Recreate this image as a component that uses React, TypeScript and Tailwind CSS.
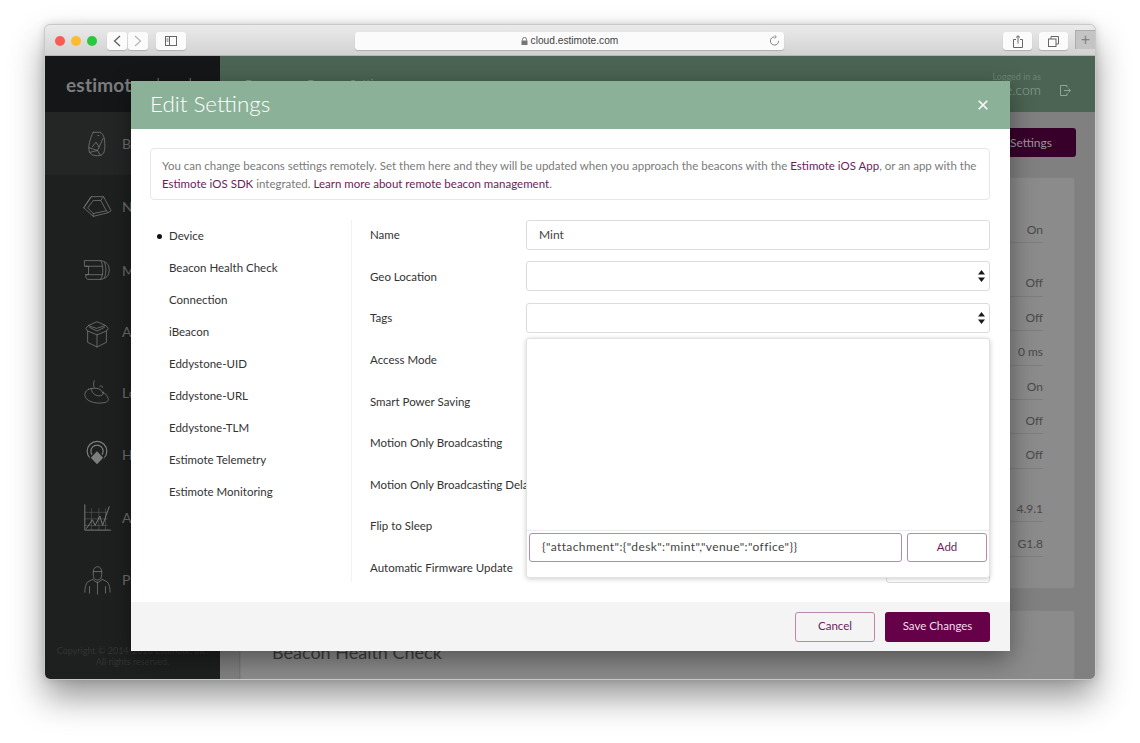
import React from "react";

const Stroke = ({ children, w = 32, h = 32 }: { children: React.ReactNode; w?: number; h?: number }) => (
  <svg width={w} height={h} viewBox="0 0 32 32" fill="none" stroke="#7d7d7d" strokeWidth="0.8" strokeLinejoin="round" strokeLinecap="round">
    {children}
  </svg>
);

const icons: React.ReactNode[] = [
  <Stroke key="a"><path d="M12 3.500h7c3 1 4.500 4 5 8 .6 5 .6 10-.5 13-1 3-4 4-7 4-4 0-7-1-8.500-4-1-3-1-6 0-10 1-4 2-8 4-11z" /><path d="M7.500 20l9 3 3 5M16.500 23l6-13M8 25l8-2M17 7h1" /><path d="M11 19l4-5 3 5" /></Stroke>,
  <Stroke key="b"><path d="M10 5h13l8 15-3 2-16 4-10-9zM10 5l-8 12M23 5l-3 4H12L6 17l6 6 14-3-6-11M12 23v3M26 20l2 2" /></Stroke>,
  <Stroke key="c"><path d="M3 6h17c6 1 9 4 9 10s-3 9-9 10H6c-2-1-2-3-2-5h3v-9H3zM4 12h17M4 21h18M20 6c3 4 3 16 0 20M24 8c2 4 2 12 0 16" /></Stroke>,
  <Stroke key="d"><path d="M16 12l9-3-9-4-9 4zM7 9l-3 3 2 3 10 4 10-4 2-3-3-3M8 11v0l8 4 8-4M6 15v12l10 5 10-5V15M16 19v13" /></Stroke>,
  <Stroke key="e"><path d="M13 3c-1 3-1 5 0 7M7 12c-4 2-5 6-3 9 3 5 13 7 21 5 3-1 4-3 2-6-1-2-2-4-5-4-1-3-3-5-7-5-3 0-6 0-8 1z" /><path d="M10 11c0 5 4 8 8 8 3 0 5-1 5-4M19 9c1-1 3-1 3 1" /></Stroke>,
  <Stroke key="f"><circle cx="16" cy="13" r="10.500" strokeWidth="1.300" /><circle cx="16" cy="13" r="6.500" strokeWidth="1.300" /><path d="M16 12l7.500 8-7.500 8-7.500-8z" fill="#7d7d7d" stroke="#1e1f1f" strokeWidth="1.200" /></Stroke>,
  <Stroke key="g"><path d="M3 3v27h28M3 11h24M3 18h24M3 25h24M10 7v23M18 7v23M25 7v23" strokeWidth="0.400" /><path d="M3 3v27h27" strokeWidth="0.800" /><path d="M5 28l6-9 3 6 5-10 3 10 7-20" strokeWidth="1" /></Stroke>,
  <Stroke key="h"><path d="M12 7c0-7 9-7 9 0v3c0 4-2 6-4.500 6S12 14 12 10zM12 7h9M12 15l-6 3c-2 2-3 7-3 11M21 15l6 3c2 2 3 7 3 11M16.500 18v13M8 23v7M25 23v7M12 16l4.500 3 4.500-3" /></Stroke>,
];

const sideLabels = ["Beacons", "Nearables", "Mirrors", "Apps", "Location", "Health", "Analytics", "Profile"];
const sideTops = ["h-[63px]", "h-[63px]", "h-[64px]", "h-[59px]", "h-[63px]", "h-[60px]", "h-[66px]", "h-[59px]"];

const nav = ["Device", "Beacon Health Check", "Connection", "iBeacon", "Eddystone-UID", "Eddystone-URL", "Eddystone-TLM", "Estimote Telemetry", "Estimote Monitoring"];
const labels = ["Name", "Geo Location", "Tags", "Access Mode", "Smart Power Saving", "Motion Only Broadcasting", "Motion Only Broadcasting Delay", "Flip to Sleep", "Automatic Firmware Update"];

const Arrows = () => (
  <svg width="7" height="12" viewBox="0 0 7 12" className="shrink-0">
    <path d="M3.500 0L7 4.500H0zM3.500 12L0 7.500h7z" fill="#1a1a1a" />
  </svg>
);

const ToolBtn = ({ className, children }: { className: string; children: React.ReactNode }) => (
  <div className={`h-[18px] flex items-center justify-center bg-[#fbfbfb] rounded-[3px] shadow-[0_1px_1px_rgba(0,0,0,0.18)] ${className}`}>{children}</div>
);

const Value = ({ v, h }: { v: string; h: string }) => (
  <div className={`${h} flex items-center justify-end border-b border-[#7e7e7e] text-[12px] text-[#4a4a4a]`}>{v}</div>
);

export default function App() {
  return (
    <div className="w-[1140px] h-[743px] bg-white overflow-hidden pt-[25px] pl-[45px] font-['Lato',sans-serif]">
      <div className="relative w-[1050px] h-[654px] rounded-[5px] overflow-hidden flex flex-col shadow-[0_18px_34px_rgba(0,0,0,0.42),0_0_10px_rgba(0,0,0,0.18)] outline outline-[#c9c9c9]">
        {/* Browser toolbar */}
        <div className="h-[31px] shrink-0 flex items-start pt-[7px] bg-gradient-to-b from-[#ebebeb] to-[#d2d2d2] border-b border-[#b5b5b5]">
          <div className="flex gap-[6px] pl-[10px] pt-[4px] w-[62px]">
            <span className="w-[10px] h-[10px] rounded-full bg-[#fb5a55]" />
            <span className="w-[10px] h-[10px] rounded-full bg-[#fdbc2e]" />
            <span className="w-[10px] h-[10px] rounded-full bg-[#28c83f]" />
          </div>
          <ToolBtn className="w-[20px]">
            <svg width="8" height="12" viewBox="0 0 8 12" fill="none" stroke="#5a5a5a" strokeWidth="1.200"><path d="M7 1L1.500 6 7 11" /></svg>
          </ToolBtn>
          <ToolBtn className="w-[20px] ml-[1px]">
            <svg width="8" height="12" viewBox="0 0 8 12" fill="none" stroke="#b5b5b5" strokeWidth="1.200"><path d="M1 1l5.500 5L1 11" /></svg>
          </ToolBtn>
          <ToolBtn className="w-[30px] ml-[8px]">
            <svg width="12" height="10" viewBox="0 0 12 10" fill="none" stroke="#666" strokeWidth="1"><rect x="0.500" y="0.500" width="11" height="9" /><path d="M4.500 0.500v9M1.500 3h2M1.500 5h2" /></svg>
          </ToolBtn>
          <ToolBtn className="w-[431px] ml-[169px] relative">
            <svg width="7" height="8" viewBox="0 0 7 8" className="mr-[3px]"><path d="M1.500 3.500V2.400a2 2 0 014 0v1.100" fill="none" stroke="#777" /><rect x="0.500" y="3.500" width="6" height="4.500" fill="#777" /></svg>
            <span className="text-[10.200px] text-[#444] font-['Liberation_Sans',sans-serif]">cloud.estimote.com</span>
            <svg width="11" height="11" viewBox="0 0 12 12" fill="none" stroke="#777" strokeWidth="1" className="absolute right-[4px] top-[3px]"><path d="M6 2a4.500 4.500 0 104.500 4.500M6 0.200L8 2 6 3.800" /></svg>
          </ToolBtn>
          <ToolBtn className="w-[29px] ml-[219px]">
            <svg width="10" height="13" viewBox="0 0 10 13" fill="none" stroke="#666" strokeWidth="1"><path d="M3 4.500H.5v8h9v-8H7M5 8.500V1M3 2.500L5 .7l2 1.800" /></svg>
          </ToolBtn>
          <ToolBtn className="w-[29px] ml-[7px]">
            <svg width="11" height="11" viewBox="0 0 11 11" fill="none" stroke="#666" strokeWidth="1"><path d="M3 3V.5h7.500V8H8" /><rect x="0.500" y="3" width="7.500" height="7.500" /></svg>
          </ToolBtn>
          <div className="w-[20px] h-[19px] ml-[7px] mt-[-2px] bg-[#c4c4c4] border-l border-t border-[#adadad] flex items-center justify-center text-[#808080] text-[16px] leading-none font-['Liberation_Sans',sans-serif]">+</div>
        </div>

        {/* Dimmed page */}
        <div className="flex flex-1 min-h-0 bg-[#808080]">
          <aside className="w-[175px] shrink-0 flex flex-col bg-[#1e1f1f]">
            <div className="h-[56px] shrink-0 bg-[#151618] flex items-center pl-[21px] pt-[2px] text-[19px] font-bold text-[#7c7d7e] whitespace-nowrap tracking-[0.2px]">
              estimote<span className="font-light ml-[5px]">cloud</span>
            </div>
            {icons.map((ic, i) => (
              <div key={sideLabels[i]} className={`${sideTops[i]} shrink-0 flex items-center pl-[37px] gap-[10px] ${i === 0 ? "bg-[#242625]" : ""}`}>
                <span className="w-[30px] flex justify-center">{ic}</span>
                <span className="text-[14px] text-[#6e6e6e]">{sideLabels[i]}</span>
              </div>
            ))}
            <div className="mt-auto pb-[12px] text-center text-[9px] leading-[11px] text-[#333434]">
              Copyright © 2014-2016 Estimote, Inc.<br />All rights reserved.
            </div>
          </aside>
          <main className="flex-1 min-w-0 flex flex-col">
            <div className="h-[56px] shrink-0 bg-[#4b6453] flex items-start justify-between pl-[25px] pr-[24px] pt-[15px] text-[#7c9384]">
              <div className="text-[12px] flex gap-[18px] pt-[4px]">
                <span>Beacons</span><span>Beacon Settings</span>
              </div>
              <div className="flex items-center gap-[19px]">
                <div className="text-right">
                  <div className="text-[9px] leading-[10px] text-[#6b8373] pt-[1px]">Logged in as</div>
                  <div className="text-[14px] leading-[14px] font-light text-[#91a497] pt-[1px]">estimote@estimote.com</div>
                </div>
                <svg width="11" height="11" viewBox="0 0 11 11" fill="none" stroke="#91a497" strokeWidth="1" className="mt-[12px]"><path d="M7 2.500V.5H.5v10H7V8M4 5.500h6.500M8.500 3.500l2 2-2 2" /></svg>
              </div>
            </div>
            <div className="flex-1 min-h-0 overflow-hidden border-l border-[#777] ml-[19px] bg-[#8b8b8b] flex flex-col">
              <div className="flex-1 min-h-0 bg-[#808080]">
                <div className="flex justify-end pr-[19px] pt-[16px] pb-[20px]">
                  <div className="w-[140px] h-[29px] rounded-[3px] bg-[#37002a] text-[#9a9a9a] text-[12px] flex items-center justify-end pr-[24px]">Edit Settings</div>
                </div>
                <div className="mr-[20px] h-[412px] rounded-[3px] bg-[#8b8b8b] border border-[#828282] pr-[31px] pl-[400px]">
                  <Value v="On" h="h-[65px] pt-[39px]" />
                  <Value v="Off" h="h-[54px] pt-[27px]" />
                  <Value v="Off" h="h-[34px] pt-[8px]" />
                  <Value v="0 ms" h="h-[35px] pt-[8px]" />
                  <Value v="On" h="h-[34px] pt-[8px]" />
                  <Value v="Off" h="h-[34px] pt-[8px]" />
                  <Value v="Off" h="h-[35px] pt-[8px]" />
                  <Value v="4.9.1" h="h-[53px] pt-[27px]" />
                  <Value v="G1.8" h="h-[35px] pt-[9px]" />
                </div>
                <div className="mr-[20px] mt-[21px] h-[90px] rounded-[3px] bg-[#8b8b8b] border border-[#828282] pl-[31px] pt-[29px] text-[18px] leading-[24px] text-[#3c3c3c]">
                  Beacon Health Check
                </div>
              </div>
            </div>
          </main>
        </div>

        {/* Modal */}
        <div className="absolute left-[86px] top-[56px] w-[879px] h-[570px] bg-white flex flex-col shadow-[0_8px_24px_rgba(0,0,0,0.4)]">
          <div className="h-[48px] shrink-0 bg-[#8bb298] flex items-center justify-between pl-[19px] pr-[22px]">
            <span className="text-[22.400px] font-light text-white pb-[2px]">Edit Settings</span>
            <svg width="10" height="10" viewBox="0 0 10 10" stroke="#fff" strokeWidth="1.600" className="mb-[1px]"><path d="M.7.7l8.600 8.600M9.300.7L.7 9.300" /></svg>
          </div>
          <div className="flex-1 min-h-0 pl-[19px] pr-[20px] pt-[19px]">
            <div className="h-[52px] rounded-[4px] border border-[#e6e6e6] px-[11px] py-[8px] text-[11.500px] leading-[18px] text-[#7a7a7a] whitespace-nowrap">
              You can change beacons settings remotely. Set them here and they will be updated when you approach the beacons with the <span className="text-[#6b1d5a]">Estimote iOS App</span>, or an app with the
              <br />
              <span className="text-[#6b1d5a]">Estimote iOS SDK</span> integrated. <span className="text-[#6b1d5a]">Learn more about remote beacon management</span>.
            </div>
            <div className="flex mt-[20px] relative">
              <ul className="w-[202px] shrink-0 border-r border-[#f2f2f2] h-[362px] text-[11.500px] text-[#333]">
                {nav.map((n, i) => (
                  <li key={n} className="h-[32px] flex items-center pl-[7px] gap-[7px]">
                    <span className={`w-[5px] h-[5px] rounded-full shrink-0 ${i === 0 ? "bg-[#111]" : ""}`} />
                    {n}
                  </li>
                ))}
              </ul>
              <div className="flex-1 min-w-0 pl-[18px] mt-[-6px]">
                {labels.map((l, i) => (
                  <div key={l} className="h-[41.600px] flex items-center">
                    <span className="w-[156px] shrink-0 text-[11.500px] text-[#333] whitespace-nowrap">{l}</span>
                    {i === 0 && (
                      <div className="flex-1 h-[30px] border border-[#dcdcdc] rounded-[3px] flex items-center px-[12px] text-[12px] text-[#444]">Mint</div>
                    )}
                    {(i === 1 || i === 2) && (
                      <div className="flex-1 h-[30px] border border-[#dcdcdc] rounded-[3px] flex items-center justify-end pr-[4px]"><Arrows /></div>
                    )}
                  </div>
                ))}
              </div>
              {/* select peeking out below the dropdown */}
              <div className="absolute right-0 top-[328px] w-[104px] h-[35px] border border-[#dcdcdc] rounded-[3px]" />
              {/* Dropdown */}
              <div className="absolute right-0 top-[118px] w-[464px] h-[240px] bg-white rounded-[3px] border border-[#e2e2e2] shadow-[0_1px_5px_rgba(0,0,0,0.2)] flex flex-col">
                <div className="flex-1" />
                <div className="h-[47px] border-t border-[#ececec] shrink-0 flex gap-[5px] px-[2px] pt-[2px] pb-[15px]">
                  <div className="flex-1 border border-[#b889a9] rounded-[3px] flex items-center pl-[12px] pb-[1px] text-[12px] tracking-[0.39px] text-[#444] whitespace-nowrap">
                    {'{"attachment":{"desk":"mint","venue":"office"}}'}
                  </div>
                  <div className="w-[80px] border border-[#b889a9] rounded-[3px] flex items-center justify-center pb-[1px] text-[11.500px] text-[#6b1d5a]">Add</div>
                </div>
              </div>
            </div>
          </div>
          <div className="h-[49px] shrink-0 bg-[#f4f4f4] flex items-center justify-end gap-[10px] pr-[20px]">
            <div className="w-[80px] h-[30px] border border-[#b889a9] rounded-[3px] flex items-center justify-center pb-[1px] text-[11.500px] text-[#6b1d5a]">Cancel</div>
            <div className="w-[105px] h-[30px] bg-[#660049] rounded-[3px] flex items-center justify-center pb-[1px] text-[11.500px] text-[#f0dfe9]">Save Changes</div>
          </div>
        </div>
      </div>
    </div>
  );
}
